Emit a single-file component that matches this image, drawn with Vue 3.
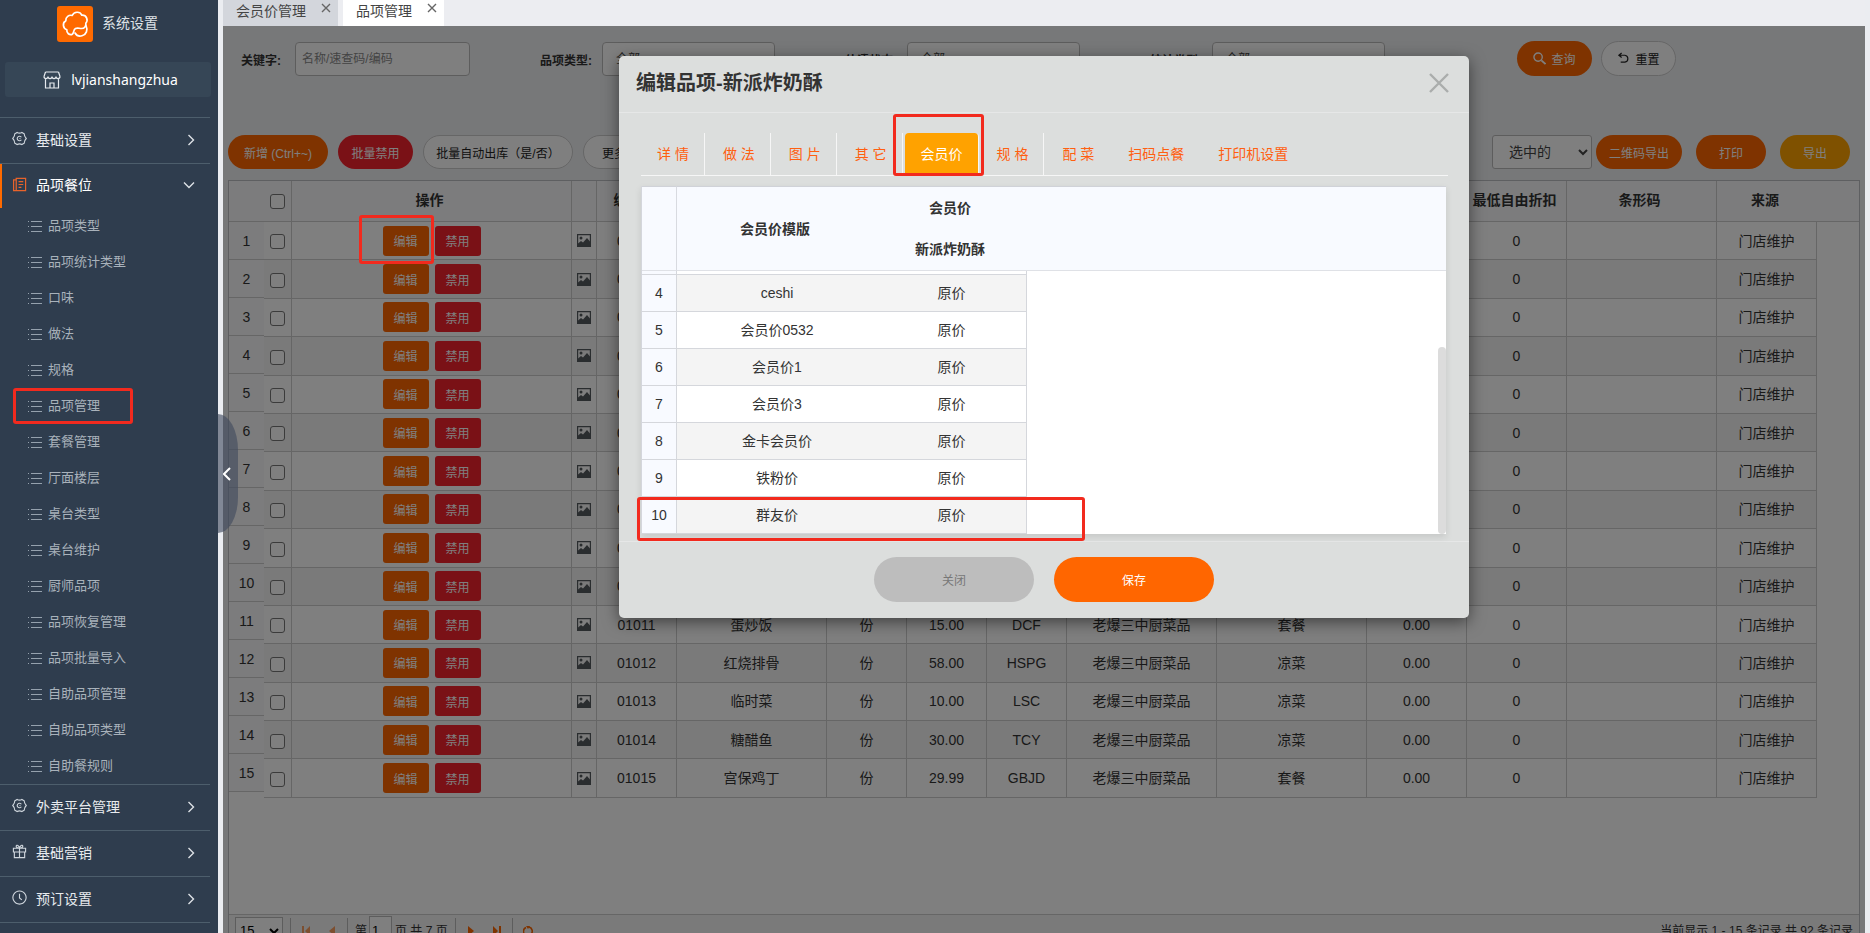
<script setup>
import { ref } from 'vue'

const subMenu = [
  '品项类型', '品项统计类型', '口味', '做法', '规格', '品项管理', '套餐管理', '厅面楼层',
  '桌台类型', '桌台维护', '厨师品项', '品项恢复管理', '品项批量导入', '自助品项管理',
  '自助品项类型', '自助餐规则',
]
const lowerMenu = [
  { label: '外卖平台管理', icon: 'gear' },
  { label: '基础营销', icon: 'gift' },
  { label: '预订设置', icon: 'clock' },
]
const kitchen = '老爆三中厨菜品'
const detail = {
  11: ['蛋炒饭', '份', '15.00', 'DCF', kitchen, '套餐', '0.00'],
  12: ['红烧排骨', '份', '58.00', 'HSPG', kitchen, '凉菜', '0.00'],
  13: ['临时菜', '份', '10.00', 'LSC', kitchen, '凉菜', '0.00'],
  14: ['糖醋鱼', '份', '30.00', 'TCY', kitchen, '凉菜', '0.00'],
  15: ['宫保鸡丁', '份', '29.99', 'GBJD', kitchen, '套餐', '0.00'],
}
const rows = Array.from({ length: 15 }, (_, i) => ({
  no: i + 1,
  code: '010' + String(i + 1).padStart(2, '0'),
  cells: detail[i + 1] || ['', '', '', '', '', '', ''],
}))
const dialogTabs = [
  { label: '详 情', line: true },
  { label: '做 法', line: true },
  { label: '图 片', line: true },
  { label: '其 它', line: true },
  { label: '会员价', line: true, active: true },
  { label: '规 格', line: true },
  { label: '配 菜' },
  { label: '扫码点餐' },
  { label: '打印机设置' },
]
const prices = [
  [4, 'ceshi'], [5, '会员价0532'], [6, '会员价1'], [7, '会员价3'],
  [8, '金卡会员价'], [9, '铁粉价'], [10, '群友价'],
]
const keyword = ref('')
const page = ref('1')
</script>

<template>
  <div class="app">
    <aside class="sidebar">
      <div class="brand">
        <svg class="logo" viewBox="0 0 36 36">
          <rect width="36" height="36" rx="3" fill="#ff6a00" />
          <g fill="none" stroke="#fff" stroke-width="1.7" stroke-linecap="round" stroke-linejoin="round">
            <path d="M15 28.5c-2.500.5-5.500-1-5.200-4.800C6 22.500 5 17 8.800 14.800 8.500 11 12 8.500 15.200 9.500 17 5.500 23 5 24.800 9.200 29.500 8.800 31.500 14 28.800 17.200c.5 3-1.300 5.300-4.300 5.300-2.500 0-4-1-6 0-2.500 1.300-1 4.500-3.500 6" />
            <path d="M29 19.500c2 4.500.5 9-4 10.300-3 .8-5.700-.5-7-2.800" />
          </g>
        </svg>
        <span>系统设置</span>
      </div>
      <div class="user">
        <svg viewBox="0 0 18 18" fill="none" stroke="#e6eaee" stroke-width="1.2">
          <path d="M2.500 1h13M2.500 1L1 5.500M15.500 1L17 5.500M1 5.500c0 2.700 4 2.700 4 0 0 2.700 4 2.700 4 0 0 2.700 4 2.700 4 0 0 2.700 4 2.700 4 0M2.500 8v9h13V8M7 17v-5h4v5" />
        </svg>
        <span>lvjianshangzhua</span>
      </div>
      <nav>
        <a class="item" href="#">
          <svg class="ico" viewBox="0 0 16 16" fill="none" stroke="#cfd6dd" stroke-width="1.200">
            <path d="M5.500 1.500Q8 3 10.500 1.500L13 3Q13 5.800 15.200 8 13 10.200 13 13l-2.500 1.500Q8 13 5.500 14.500L3 13Q3 10.200.8 8 3 5.800 3 3z" /><path d="M10 6.700a2.400 2.400 0 1 0 0 2.600M8 8h1" />
          </svg>
          <span>基础设置</span>
          <svg class="arrow" viewBox="0 0 12 12"><path d="M3.500 1l5 5-5 5" /></svg>
        </a>
        <a class="item open" href="#">
          <svg class="ico" viewBox="0 0 16 16" fill="none" stroke="#e8632b" stroke-width="1.300">
            <path d="M4.500 1.500h10v13h-10zM4.500 3H1.700v11.500h3M7 5h5M7 8h5M7 11h3" />
          </svg>
          <span>品项餐位</span>
          <svg class="arrow" viewBox="0 0 12 12"><path d="M1 3.500l5 5 5-5" /></svg>
        </a>
        <ul class="sub">
          <li v-for="s in subMenu" :key="s">
            <a href="#">
              <svg viewBox="0 0 14 13" stroke="#95a1ad" stroke-width="1"><path d="M3 1.500H14M3 6.500H14M3 11.500H14M0 1.500h1M0 6.500h1M0 11.500h1" /></svg>
              <span>{{ s }}</span>
            </a>
          </li>
        </ul>
        <a v-for="m in lowerMenu" :key="m.label" class="item" href="#">
          <svg class="ico" viewBox="0 0 16 16" fill="none" stroke="#cfd6dd" stroke-width="1.200">
            <template v-if="m.icon === 'gear'">
              <path d="M5.500 1.500Q8 3 10.500 1.500L13 3Q13 5.800 15.200 8 13 10.200 13 13l-2.500 1.500Q8 13 5.500 14.500L3 13Q3 10.200.8 8 3 5.800 3 3z" /><path d="M10 6.700a2.400 2.400 0 1 0 0 2.600M8 8h1" />
            </template>
            <path v-else-if="m.icon === 'gift'" d="M1.500 4.500h13v4h-13zM2.500 8.500v6h11v-6M8 4.500v10M8 4.500C6 4.500 4 3.500 4.500 2S7.500 1.500 8 4.500C8.500 1.500 11 .5 11.500 2S10 4.500 8 4.500" />
            <path v-else d="M8 1a7 7 0 1 0 .01 0M8 4v4.500l2.500 2" />
          </svg>
          <span>{{ m.label }}</span>
          <svg class="arrow" viewBox="0 0 12 12"><path d="M3.500 1l5 5-5 5" /></svg>
        </a>
        <div class="item"></div>
      </nav>
    </aside>

    <main class="main">
      <div class="tabs">
        <div class="tab"><span>会员价管理</span><button aria-label="关闭会员价管理"><svg viewBox="0 0 10 10"><path d="M1 1l8 8M9 1l-8 8" /></svg></button></div>
        <div class="tab current"><span>品项管理</span><button aria-label="关闭品项管理"><svg viewBox="0 0 10 10"><path d="M1 1l8 8M9 1l-8 8" /></svg></button></div>
      </div>

      <div class="stage">
        <div class="page">
          <form class="filters" @submit.prevent>
            <label for="kw">关键字:</label>
            <input id="kw" v-model="keyword" class="field" placeholder="名称/速查码/编码">
            <label for="f1">品项类型:</label>
            <select id="f1" class="field"><option>全部</option></select>
            <label for="f2">估清状态:</label>
            <select id="f2" class="field"><option>全部</option></select>
            <label for="f3">统计类型:</label>
            <select id="f3" class="field"><option>全部</option></select>
            <div class="actions">
              <button class="pill orange">
                <svg viewBox="0 0 14 14" fill="none" stroke="currentColor" stroke-width="1.500"><circle cx="5.500" cy="5.500" r="4.500" /><path d="M9 9l4.500 4" stroke-width="2" /></svg>查询
              </button>
              <button class="pill plain">
                <svg viewBox="0 0 14 14" fill="none" stroke="currentColor" stroke-width="1.300"><path d="M5 1L2 3.500 5 6M2 3.500h6.500a3.800 3.800 0 0 1 0 7.500H4" /></svg>重置
              </button>
            </div>
          </form>

          <div class="toolbar">
            <button class="pill orange w100">新增 (Ctrl+~)</button>
            <button class="pill red">批量禁用</button>
            <button class="pill plain w150">批量自动出库（是/否）</button>
            <button class="pill plain w86">更多操作</button>
            <div class="right">
              <select class="scope" aria-label="导出范围"><option>选中的</option></select>
              <button class="pill orange w86">二维码导出</button>
              <button class="pill orange w70">打印</button>
              <button class="pill amber w70">导出</button>
            </div>
          </div>

          <section class="grid">
            <table class="head">
              <colgroup>
                <col class="c63"><col class="c280"><col class="c25"><col class="c80"><col class="c150"><col class="c80"><col class="c80"><col class="c80">
                <col class="c150"><col class="c150"><col class="c100"><col class="c100"><col class="c150"><col class="c100"><col>
              </colgroup>
              <thead>
                <tr>
                  <th class="all"><input type="checkbox" aria-label="全选"></th>
                  <th>操作</th><th></th><th>编　码</th><th></th><th></th><th></th><th></th><th></th><th></th><th></th>
                  <th>最低自由折扣</th><th>条形码</th><th class="nb">来源</th><th class="nb"></th>
                </tr>
              </thead>
            </table>
            <div class="body">
              <table class="nums">
                <tbody><tr v-for="r in rows" :key="r.no"><td>{{ r.no }}</td></tr></tbody>
              </table>
              <table class="data">
                <colgroup>
                  <col class="c28"><col class="c280"><col class="c25"><col class="c80"><col class="c150"><col class="c80"><col class="c80"><col class="c80">
                  <col class="c150"><col class="c150"><col class="c100"><col class="c100"><col class="c150"><col class="c100">
                </colgroup>
                <tbody>
                  <tr v-for="r in rows" :key="r.no">
                    <td><input type="checkbox" :aria-label="'选择 ' + r.code"></td>
                    <td><div class="ops"><button class="op orange">编辑</button><button class="op red">禁用</button></div></td>
                    <td>
                      <svg class="pic" viewBox="0 0 14 13"><path fill="none" stroke="#555a5e" stroke-width="1.200" d="M.6.6h12.800v11.800H.6z" /><circle cx="4" cy="4" r="1.500" fill="#555a5e" /><path fill="#555a5e" d="M1 12V9.500L4 7l2 1.500L10 4l3 3.500V12z" /></svg>
                    </td>
                    <td>{{ r.code }}</td>
                    <td v-for="(c, i) in r.cells" :key="i">{{ c }}</td>
                    <td>0</td>
                    <td></td>
                    <td>门店维护</td>
                  </tr>
                </tbody>
              </table>
            </div>
            <footer class="pager">
              <select aria-label="每页条数"><option>15</option></select>
              <i class="bar"></i>
              <button class="pg dim" aria-label="首页"><svg viewBox="0 0 10 10"><path d="M1 0h2v10H1zM9 0v10L4 5z" /></svg></button>
              <button class="pg dim" aria-label="上一页"><svg viewBox="0 0 10 10"><path d="M8 0v10L2 5z" /></svg></button>
              <i class="bar"></i>
              <label for="pg">第</label>
              <input id="pg" v-model="page">
              <span class="total">页 共 7 页</span>
              <i class="bar"></i>
              <button class="pg" aria-label="下一页"><svg viewBox="0 0 10 10"><path d="M2 0v10l6-5z" /></svg></button>
              <button class="pg" aria-label="末页"><svg viewBox="0 0 10 10"><path d="M7 0h2v10H7zM1 0v10l5-5z" /></svg></button>
              <i class="bar"></i>
              <button class="pg" aria-label="刷新"><svg viewBox="0 0 10 10"><path fill="none" stroke="#f60" stroke-width="1.600" d="M4 9.500A4.200 4.200 0 0 1 3 1.500M6 1a4.200 4.200 0 0 1 1.500 7.500" /><path d="M3 0h4L5 3z" /></svg></button>
              <span class="info">当前显示 1 - 15 条记录 共 92 条记录</span>
            </footer>
          </section>
        </div>

        <div class="mask">
          <div class="dialog" role="dialog" aria-labelledby="dlg-title">
            <header>
              <h2 id="dlg-title">编辑品项-新派炸奶酥</h2>
              <button aria-label="关闭窗口"><svg viewBox="0 0 20 20"><path d="M1 1l18 18M19 1L1 19" /></svg></button>
            </header>
            <div class="content">
              <div class="dtabs">
                <a v-for="t in dialogTabs" :key="t.label" href="#" :class="{ line: t.line, active: t.active }">{{ t.label }}</a>
              </div>
              <div class="panel">
                <table class="phead">
                  <colgroup><col class="c35"><col class="c200"><col class="c150"><col></colgroup>
                  <thead>
                    <tr><th rowspan="2" class="rl"></th><th rowspan="2">会员价模版</th><th>会员价</th><th rowspan="2"></th></tr>
                    <tr><th>新派炸奶酥</th></tr>
                  </thead>
                </table>
                <div class="pbody">
                  <table>
                    <colgroup><col class="c35"><col class="c200"><col class="c150"></colgroup>
                    <tbody>
                      <tr class="tail"><td></td><td></td><td></td></tr>
                      <tr v-for="p in prices" :key="p[0]"><td>{{ p[0] }}</td><td>{{ p[1] }}</td><td>原价</td></tr>
                    </tbody>
                  </table>
                  <i class="thumb"></i>
                </div>
              </div>
            </div>
            <footer>
              <button class="close">关闭</button>
              <button class="save">保存</button>
            </footer>
            <i class="mark m-tab"></i>
            <i class="mark m-row"></i>
          </div>
        </div>
      </div>
    </main>

    <button class="handle" aria-label="收起菜单"><svg viewBox="0 0 8 14"><path d="M7 1L1 7l6 6" /></svg></button>
    <i class="mark m-menu"></i>
    <i class="mark m-edit"></i>
  </div>
</template>

<style>
body { margin: 0; }
</style>

<style scoped>
* { box-sizing: border-box; }
.app {
  position: relative;
  display: flex;
  gap: 5px;
  height: 100vh;
  padding-right: 5px;
  overflow: hidden;
  background: #ebedf1;
  color: #333;
  font: 14px/20px "Liberation Sans", "Noto Sans CJK SC", sans-serif;
}
button, input, select { font-family: inherit; }
button { margin: 0; padding: 0; border: 0; background: none; cursor: pointer; }
a { text-decoration: none; }

.sidebar { flex: none; width: 218px; background: #2f3d4e; color: #e8ebee; }
.brand { display: flex; align-items: center; gap: 9px; height: 36px; margin: 6px 0 20px 57px; color: #dfe3e7; }
.brand span { padding-bottom: 2px; }
.logo { width: 36px; height: 36px; }
.user {
  display: flex; align-items: center; justify-content: center; gap: 10px;
  height: 35px; margin: 0 7px 20px 5px; padding-left: 5px;
  border-radius: 3px; background: #364656; color: #fff;
  font: 14px/20px "Noto Sans", "Noto Sans CJK SC", sans-serif;
}
.user svg { width: 18px; height: 18px; }
.item {
  display: flex; align-items: center; height: 46px; width: 210px; padding: 0 12px 2px;
  border-top: 1px solid #4d5e6c; color: #e8ebee;
}
.item span { flex: 1; margin-left: 9px; }
.ico { width: 15px; height: 15px; margin-bottom: 2px; }
.arrow { width: 12px; height: 12px; margin-right: 1px; fill: none; stroke: #dde2e6; stroke-width: 1.4; }
.item.open { height: 45px; color: #fff; box-shadow: inset 2px 0 #ff6a00; }
.item.open .arrow { margin-right: 3px; }
.sub { margin: 0; padding: 0; list-style: none; }
.sub a { display: flex; align-items: center; gap: 6px; height: 36px; padding-left: 28px; color: #a9b2bb; font-size: 13px; }
.sub svg { width: 14px; height: 13px; }

.main { flex: 1; min-width: 0; display: flex; flex-direction: column; }
.tabs { display: flex; gap: 5px; height: 26px; flex: none; background: #ecedf1; }
.tab { display: flex; width: 115px; padding-left: 13px; background: #d3d6dc; color: #444; line-height: 22px; }
.tab.current { width: 101px; background: #fff; }
.tab span { flex: 1; }
.tab button { width: 10px; height: 16px; margin-right: 7px; }
.tab svg { display: block; width: 10px; height: 10px; fill: none; stroke: #666; stroke-width: 1.4; }

.stage { position: relative; flex: 1; min-height: 0; overflow: hidden; }
.page { display: flex; flex-direction: column; height: calc(100% + 14px); padding: 15px 5px 0; background: #eff0f3; }
.filters { display: flex; align-items: center; height: 35px; margin-bottom: 59px; font-size: 12px; }
.filters label { width: 132px; padding: 4px 10px 0 0; text-align: right; font-weight: 700; white-space: nowrap; }
.filters label:first-child { width: 67px; padding: 4px 0 0 13px; text-align: left; }
.field {
  width: 173px; height: 34px; padding: 0 9px; border: 1px solid #bbb; border-radius: 4px;
  background: #fff; color: #444; font-size: 12px;
}
input.field { width: 175px; padding: 0 6px; }
.field::placeholder { color: #888; }
.actions { display: flex; gap: 9px; margin-left: 132px; }
.actions .pill { width: 75px; height: 35px; }
.pill {
  display: inline-flex; align-items: center; justify-content: center; gap: 5px;
  height: 34px; width: 75px; border-radius: 18px; color: #fff; font-size: 12px; white-space: nowrap;
}
.pill svg { width: 13px; height: 13px; }
.orange { background: #f60; }
.red { background: #f5222d; }
.amber { background: #ffa200; }
.plain { border: 1px solid #ccc; background: #fff; color: #222; }
.w100 { width: 100px; }
.w150 { width: 150px; }
.w86 { width: 86px; }
.w70 { width: 70px; }
.toolbar { display: flex; gap: 10px; height: 34px; margin-bottom: 11px; }
.toolbar .right { display: flex; margin-left: auto; padding-right: 10px; }
.right .pill + .pill { margin-left: 14px; }
.scope { width: 100px; height: 34px; margin-right: 4px; padding-left: 12px; border: 1px solid #bbb; border-radius: 3px; background: #fff; color: #444; font-size: 14px; }

.grid { flex: 1; display: flex; flex-direction: column; min-height: 0; border: 1px solid #bcbfc3; background: #fff; }
table { border-collapse: separate; border-spacing: 0; table-layout: fixed; }
.c25 { width: 25px; } .c28 { width: 28px; } .c35 { width: 35px; } .c63 { width: 63px; } .c80 { width: 80px; }
.c100 { width: 100px; } .c150 { width: 150px; } .c200 { width: 200px; } .c280 { width: 280px; }
th, td { padding: 0; text-align: center; font-weight: 400; white-space: nowrap; overflow: hidden; }
.head { width: 100%; height: 41px; background: #f8f9fb; }
.head th { padding: 0 4px 2px 0; border-right: 1px solid #ccc; border-bottom: 1px solid #ccc; font-weight: 700; }
.head th.nb { border-right: 0; }
.head .all { text-align: right; padding-right: 6px; }
input[type=checkbox] { appearance: none; display: inline-block; width: 15px; height: 15px; margin: 0; border: 1px solid #767676; border-radius: 3px; background: #fff; vertical-align: middle; }
.body { flex: 1; min-height: 0; display: flex; align-items: flex-start; overflow: hidden; }
.nums { width: 35px; flex: none; background: #f8f9fb; }
.nums td { height: 38px; border-bottom: 1px solid #ccc; }
.data { width: 1553px; height: 576px; flex: none; }
.data td { border-right: 1px solid #ccc; border-bottom: 1px solid #ccc; }
.data tr:nth-child(even) { background: #f5f5f5; }
.ops { display: flex; justify-content: center; gap: 6px; }
.op { width: 46px; height: 30px; border-radius: 3px; color: #fff; font-size: 12px; }
.pic { display: block; width: 14px; height: 13px; margin: 0 auto; }

.pager { display: flex; align-items: center; height: 32px; flex: none; padding: 0 6px; border-top: 1px solid #ccc; background: #f4f4f5; font-size: 12px; }
.pager select { width: 48px; height: 28px; margin-right: 5px; border: 1px solid #bbb; background: #fff; font-size: 13px; }
.bar { width: 1px; height: 26px; margin: 0 2px; background: #bbb; }
.pg { width: 26px; }
.pg svg { display: block; width: 10px; height: 10px; margin: 0 auto; fill: #f60; }
.pg.dim { opacity: .6; }
.pager label { margin-left: 5px; }
.pager input { width: 23px; height: 30px; margin: 0 3px 0 2px; padding: 0 2px; border: 1px solid #bbb; background: #fff; font-size: 13px; }
.total { margin-right: 5px; }
.info { margin-left: auto; }

.mask { position: absolute; inset: 0; display: flex; justify-content: center; align-items: flex-start; padding-top: 30px; background: rgba(0, 0, 0, .5); }
.dialog { position: relative; width: 850px; border-radius: 5px; background: #dcdedd; box-shadow: 0 4px 16px rgba(0, 0, 0, .5); }
.dialog header { display: flex; align-items: center; justify-content: space-between; height: 57px; padding: 0 20px 2px 17px; border-bottom: 1px solid #e6e7e7; }
h2 { margin: 0; font-size: 20px; line-height: 28px; color: #333; }
.dialog header svg { display: block; width: 20px; height: 20px; fill: none; stroke: #aaadac; stroke-width: 2.4; }
.content { padding: 20px 21px 7px 22px; border-bottom: 1px solid #e6e7e7; }
.dtabs { display: flex; height: 43px; margin-bottom: 10px; border-bottom: 1px solid #f6f6f6; }
.dtabs a { margin-right: 2px; padding: 0 15px 0 16px; border-right: 1px solid transparent; color: #ff5f10; line-height: 42px; white-space: nowrap; }
.dtabs a.line { border-right-color: #f6f6f6; }
.dtabs a.active { border-radius: 4px 4px 0 0; background: #ffa200; color: #fff; }
.panel { margin-right: 2px; border-left: 1px solid #d4d6dc; box-shadow: 0 3px 7px rgba(0, 0, 0, .1); background: #fff; }
.phead { width: 100%; height: 85px; background: #f8faff; }
.phead th { padding-right: 4px; font-weight: 700; }
.phead tr:first-child th { border-top: 1px solid #d0d2d8; }
.phead th[rowspan], .phead tr:last-child th { border-bottom: 1px solid #dfe1e6; }
.phead .rl { border-right: 1px solid #d8dae0; }
.pbody { position: relative; height: 263px; overflow: hidden; }
.pbody table { width: 385px; }
.pbody td { height: 37px; border-bottom: 1px solid #d5d7dc; }
.pbody .tail td { height: 4px; }
.pbody td:first-child { border-right: 1px solid #d5d7dc; background: #f8faff; }
.pbody td:last-child { border-right: 1px solid #d5d7dc; }
.pbody tr:nth-child(even) { background: #f4f4f4; }
.thumb { position: absolute; right: 0; bottom: 0; width: 8px; height: 187px; border-radius: 4px; background: #dcdcdc; }
.dialog footer { display: flex; justify-content: center; gap: 20px; padding: 15px 0 16px; }
.dialog footer button { width: 160px; height: 45px; border-radius: 23px; font-size: 12px; }
.dialog footer .close { background: #bdbdbd; color: #777; }
.dialog footer .save { background: #f60; color: #fff; }

.handle { position: absolute; left: 218px; top: 414px; width: 20px; height: 119px; padding-left: 5px; border-radius: 0 20px 20px 0 / 0 36px 36px 0; background: rgba(64, 74, 94, .62); }
.handle svg { display: block; width: 8px; height: 14px; fill: none; stroke: #fff; stroke-width: 2; }
.mark { position: absolute; border: 3px solid #f22a1e; border-radius: 3px; pointer-events: none; }
.m-menu { left: 13px; top: 388px; width: 120px; height: 36px; }
.m-edit { left: 359px; top: 215px; width: 75px; height: 49px; }
.m-tab { left: 274px; top: 58px; width: 91px; height: 62px; }
.m-row { left: 18px; top: 441px; width: 448px; height: 44px; }
</style>
